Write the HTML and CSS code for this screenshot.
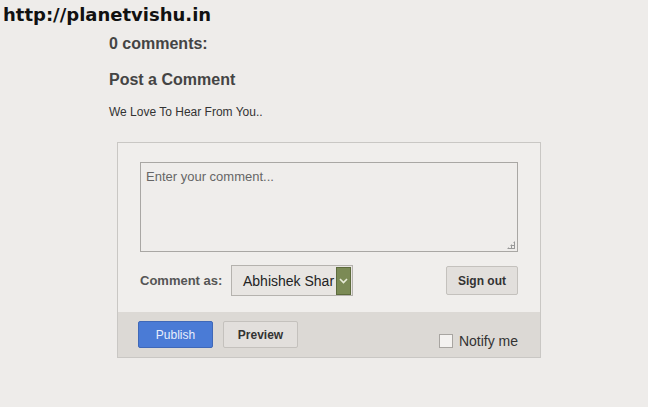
FILE: index.html
```html
<!DOCTYPE html>
<html lang="en">
<head>
    <meta charset="UTF-8">
    <title>Post a Comment</title>
    <link rel="stylesheet" href="styles.css">
</head>
<body>
<div class="site-title">http://planetvishu.in</div>

<div class="comments">
    <h4 class="count">0 comments:</h4>
    <h4 class="post-title">Post a Comment</h4>
    <p class="note">We Love To Hear From You..</p>

    <div class="comment-form">
        <div class="form-body">
            <div class="textarea">Enter your comment...<span class="grip"></span></div>
            <div class="identity">
                <span class="label">Comment as:</span>
                <div class="select">
                    <span class="select-text">Abhishek Shar</span>
                    <span class="select-arrow">
                        <svg width="9" height="6" viewBox="0 0 9 6"><path d="M1 1 L4.5 4.5 L8 1" fill="none" stroke="#e8ecd8" stroke-width="1.6"/></svg>
                    </span>
                </div>
                <button class="btn sign-out">Sign out</button>
            </div>
        </div>
        <div class="form-footer">
            <button class="btn publish">Publish</button>
            <button class="btn preview">Preview</button>
            <label class="notify"><span class="check"></span>Notify me</label>
        </div>
    </div>
</div>
</body>
</html>
```

FILE: styles.css
```css
body {
    margin: 0;
    background-color: #eeecea;
    font-family: "Liberation Sans", Arial, sans-serif;
    color: #444;
    height: 407px;
}

.site-title {
    font-family: "DejaVu Sans", Verdana, sans-serif;
    font-weight: bold;
    font-size: 18px;
    color: #111;
    padding: 4px 0 0 3px;
    height: 24px;
}

.comments {
    padding-left: 109px;
}

.comments h4 {
    margin: 0;
    font-size: 16px;
    font-weight: bold;
    color: #444;
}

.count {
    padding-top: 7px;
    height: 28px;
}

.post-title {
    padding-top: 8px;
    height: 23px;
}

.note {
    margin: 0;
    padding-top: 11px;
    font-size: 12px;
    color: #333;
    height: 18px;
}

.comment-form {
    margin: 19px 0 0 8px;
    width: 422px;
    border: 1px solid #c9c7c4;
    background-color: #f0eeec;
}

.form-body {
    padding: 19px 22px 16px 22px;
}

.textarea {
    position: relative;
    height: 82px;
    border: 1px solid #a9a7a4;
    padding: 6px 5px 0 5px;
    font-size: 13px;
    color: #666;
    background-color: #efedeb;
}

.grip {
    position: absolute;
    right: 2px;
    bottom: 2px;
    width: 8px;
    height: 8px;
    background:
        radial-gradient(circle, #999 1px, transparent 1.2px) 0 0 / 3px 3px;
    clip-path: polygon(100% 0, 100% 100%, 0 100%);
}

.identity {
    display: flex;
    align-items: center;
    margin-top: 13px;
}

.label {
    font-size: 13px;
    font-weight: bold;
    color: #555;
    width: 91px;
}

.select {
    display: flex;
    align-items: center;
    width: 122px;
    height: 31px;
    border: 1px solid #b5b2ae;
    background-color: #e8e5e2;
    box-sizing: border-box;
    padding: 1px;
}

.select-text {
    flex: 1;
    overflow: hidden;
    white-space: nowrap;
    font-size: 14px;
    color: #222;
    padding-left: 10px;
}

.select-arrow {
    width: 15px;
    height: 28px;
    background-color: #7b8a55;
    border: 1px solid #5d6b3c;
    box-sizing: border-box;
    display: flex;
    align-items: center;
    justify-content: center;
}

.btn {
    font-family: "Liberation Sans", Arial, sans-serif;
    font-size: 12px;
    font-weight: bold;
    border: 1px solid #c4c1bd;
    background-color: #e2dfdc;
    color: #333;
    border-radius: 2px;
    cursor: pointer;
}

.sign-out {
    margin-left: auto;
    width: 72px;
    height: 29px;
}

.form-footer {
    display: flex;
    align-items: center;
    height: 45px;
    background-color: #dcd9d5;
    padding: 0 22px 0 20px;
}

.publish {
    width: 75px;
    height: 27px;
    background-color: #4a7bd6;
    border-color: #3f68b8;
    color: #e8eefc;
    font-weight: normal;
}

.preview {
    width: 75px;
    height: 27px;
    margin-left: 10px;
}

.notify {
    margin-left: auto;
    margin-top: 12px;
    display: flex;
    align-items: center;
    font-size: 14px;
    color: #333;
}

.check {
    width: 12px;
    height: 12px;
    border: 1px solid #a8a5a1;
    background-color: #f4f2f0;
    margin-right: 6px;
}
```
